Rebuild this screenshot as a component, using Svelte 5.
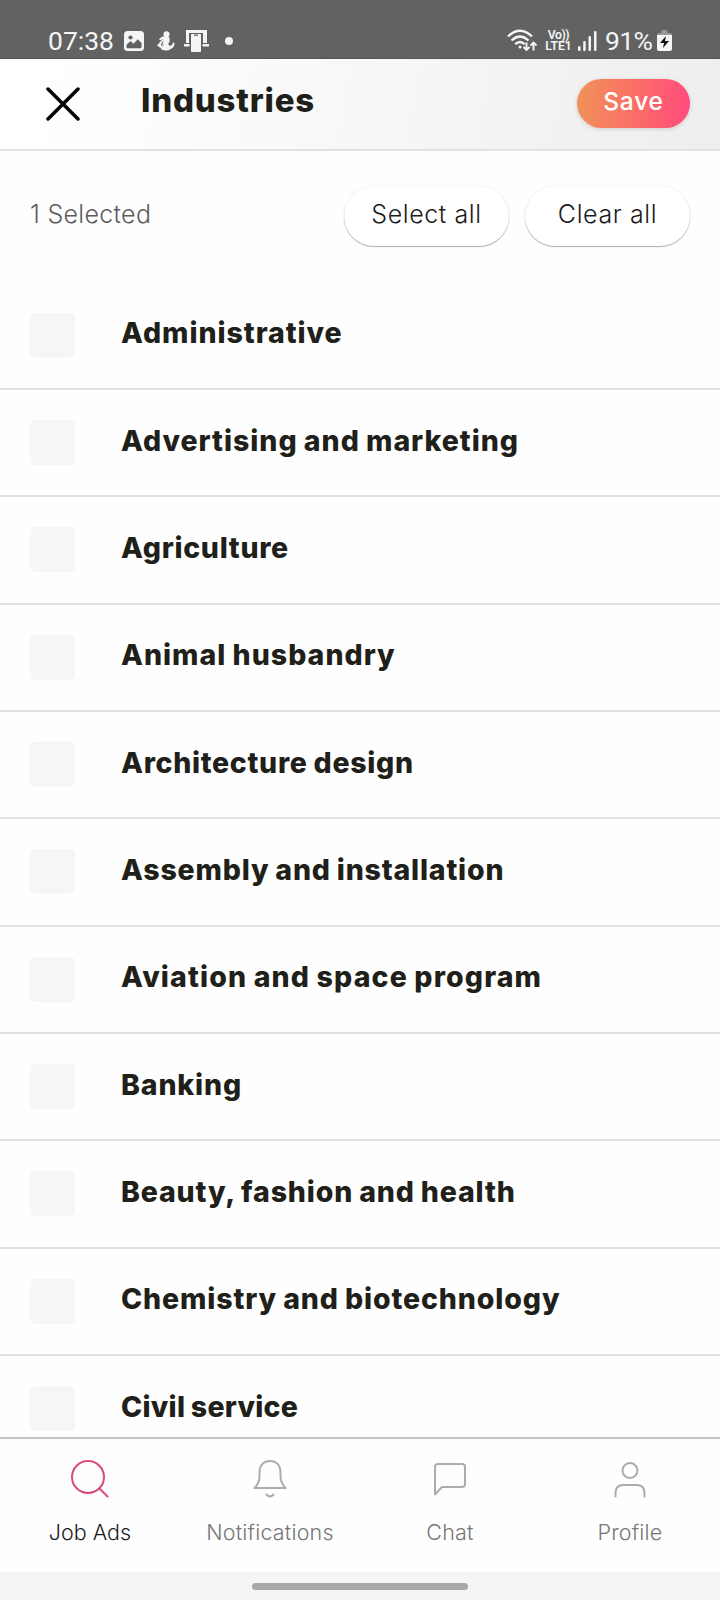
<script>
  const industries = [
    { name: 'Administrative', spacing: 0.95 },
    { name: 'Advertising and marketing', spacing: 0.97 },
    { name: 'Agriculture', spacing: 0.7 },
    { name: 'Animal husbandry', spacing: 1 },
    { name: 'Architecture design', spacing: 0.7 },
    { name: 'Assembly and installation', spacing: 0.8 },
    { name: 'Aviation and space program', spacing: 1.15 },
    { name: 'Banking', spacing: 0.85 },
    { name: 'Beauty, fashion and health', spacing: 0.84 },
    { name: 'Chemistry and biotechnology', spacing: 0.88 },
    { name: 'Civil service', spacing: 0.27 }
  ];

  const tabs = [
    { id: 'jobs', label: 'Job Ads' },
    { id: 'notifications', label: 'Notifications' },
    { id: 'chat', label: 'Chat' },
    { id: 'profile', label: 'Profile' }
  ];

  let activeTab = $state('jobs');
</script>

<div class="screen">
  <div class="status-bar">
    <div class="status-left">
      <span class="clock">07:38</span>
      <svg class="picture" width="20" height="20" viewBox="0 0 20 20">
        <rect width="20" height="20" rx="3.5" fill="#f5f5f5" />
        <circle cx="6.5" cy="6.5" r="2.1" fill="#626262" />
        <path d="M2.500 16v-2.200l4-3.800 3 2.700 4.300-4.500 3.700 3.700V16q0 1.300-1.300 1.300H3.800Q2.500 17.300 2.500 16z" fill="#626262" />
      </svg>
      <svg class="person" width="18" height="20" viewBox="0 0 18 20" fill="#f5f5f5">
        <circle cx="9.500" cy="3.200" r="3" />
        <path d="M2 8.300Q5 4.500 8 5.500l4 .5q1 1 .5 5l-1.500 2 2 2q2.500-.5 3-3.500l1.500.5q0 5-4 6Q12 19.700 8.500 19.500 5 19.500 3.500 17L0 14.500l4.500-5.200L6.500 8 3 9.300z" />
        <path d="M6 10.500 4.300 14l2.200.2" fill="none" stroke="#626262" stroke-width="1" />
      </svg>
      <svg class="device" width="25" height="22" viewBox="0 0 25 22" fill="#f5f5f5">
        <path d="M2 0h21v13h-4V3H5v10H2z" />
        <path d="M0 14h5.500v2.500H0zM18.500 14H25v2.500h-6.500z" />
        <rect x="7" y="3.500" width="10" height="18.500" rx="1" />
        <path d="M6 3.500h12" stroke="#626262" />
        <path d="M10 5.200h4" stroke="#777" stroke-width="1.500" />
      </svg>
      <span class="dot"></span>
    </div>
    <div class="status-right">
      <svg class="wifi" width="31" height="23" viewBox="0 0 31 23" fill="none" stroke="#f5f5f5" stroke-width="2.400">
        <path d="M1 7.500q12-11.500 24 0M4.500 11.500q8.500-8 17 0M8.200 15.200q4.800-4.500 9.600 0" />
        <circle cx="13" cy="18" r="1.500" fill="#f5f5f5" stroke="none" />
        <path d="M19.500 13.500v7.500M16.500 18l3 3 3-3M26.500 21.500V13.500M23.500 16.500l3-3 3 3" stroke-width="1.900" />
      </svg>
      <span class="volte"><span class="vo">Vo))</span><span>LTE1</span></span>
      <svg class="signal" width="19" height="20" viewBox="0 0 19 20" fill="#f5f5f5">
        <rect x="0" y="15" width="2.500" height="5" rx="1" />
        <rect x="5.200" y="10" width="2.500" height="10" rx="1" />
        <rect x="10.500" y="5" width="2.500" height="15" rx="1" />
        <rect x="16" y="0" width="2.500" height="20" rx="1" />
      </svg>
      <span class="percent">91%</span>
      <svg class="battery" width="15" height="22" viewBox="0 0 15 22">
        <path d="M0 5q0-2 2-2h2.500V1.500Q4.500 0 6 0h3q1.500 0 1.500 1.500V3H13q2 0 2 2z" fill="#999" />
        <path d="M0 5h15v14q0 2-2 2H2q-2 0-2-2z" fill="#f5f5f5" />
        <path d="M9 6 3 13h4l-1 5 6-7H8z" fill="#111" />
      </svg>
    </div>
  </div>

  <header class="header">
    <button class="close" aria-label="Close">
      <svg width="34" height="34" viewBox="0 0 34 34" fill="none" stroke="#000" stroke-width="3.500" stroke-linecap="round">
        <path d="M2 2l30 30M32 2 2 32" />
      </svg>
    </button>
    <h1>Industries</h1>
    <button class="save">Save</button>
  </header>

  <main class="content">
    <div class="toolbar">
      <span class="count">1 Selected</span>
      <button class="pill select-all">Select all</button>
      <button class="pill clear-all">Clear all</button>
    </div>
    <ul class="list">
      {#each industries as industry}
        <li>
          <span class="checkbox"></span>
          <span class="name" style="letter-spacing: {industry.spacing}px">{industry.name}</span>
        </li>
      {/each}
    </ul>
  </main>

  <nav class="tabs">
    {#each tabs as tab}
      <button class="tab {tab.id}" class:active={activeTab === tab.id} onclick={() => (activeTab = tab.id)}>
        <svg width="40" height="40" viewBox="0 0 40 40" fill="none" stroke="currentColor" stroke-width="2" stroke-linecap="round" stroke-linejoin="round">
          {#if tab.id === 'jobs'}
            <circle cx="18" cy="18" r="16" />
            <path d="M29.500 29.500l8 8" />
          {:else if tab.id === 'notifications'}
            <path d="M4.500 29q5-5 5-12v-3.500C9.500 6.500 13.500 2 20 2s10.500 4.500 10.500 11.500V17q0 7 5 12zM16.500 35.500q3.500 4 7 0" />
          {:else if tab.id === 'chat'}
            <path d="M5 35.500V8q0-3 3-3h24q3 0 3 3v17q0 3-3 3H12z" />
          {:else}
            <circle cx="20" cy="11.500" r="7.500" />
            <path d="M5.500 37.500V34q0-8 8-8h13q8 0 8 8v3.500" />
          {/if}
        </svg>
        <span>{tab.label}</span>
      </button>
    {/each}
  </nav>
  <div class="gesture-bar"><span></span></div>
</div>

<style>
  :global(body) {
    margin: 0;
    background: #fff;
  }

  .screen {
    display: flex;
    flex-direction: column;
    width: 720px;
    height: 1600px;
    overflow: hidden;
    background: #fefefe;
    color: #211f1a;
    font-family: Inter, 'Open Sans', sans-serif;
  }

  button {
    margin: 0;
    padding: 0;
    border: 0;
    background: none;
    color: inherit;
    font-family: inherit;
    cursor: pointer;
  }

  svg {
    display: block;
    flex-shrink: 0;
  }

  .status-bar {
    display: flex;
    justify-content: space-between;
    box-sizing: border-box;
    height: 59px;
    padding: 22px 48px 0;
    background: #626262;
    border-bottom: 1px solid #565656;
    color: #f5f5f5;
    font-family: Roboto, sans-serif;
    flex-shrink: 0;
  }

  .status-left,
  .status-right {
    display: flex;
    align-items: center;
    height: 37px;
  }

  .clock {
    width: 76px;
    font-size: 26.5px;
  }

  .picture {
    margin-right: 13px;
  }

  .person {
    margin-right: 9px;
  }

  .dot {
    width: 8px;
    height: 8px;
    margin-left: 16px;
    border-radius: 50%;
    background: #f5f5f5;
  }

  .volte {
    display: flex;
    flex-direction: column;
    align-items: center;
    width: 27px;
    margin: 0 6px 0 7px;
    font-size: 12.2px;
    font-weight: 600;
    line-height: 11px;
  }

  .vo {
    letter-spacing: -0.4px;
  }

  .signal {
    margin-right: 8px;
  }

  .percent {
    width: 52px;
    font-size: 26.5px;
    letter-spacing: -0.6px;
  }

  .header {
    display: flex;
    align-items: center;
    box-sizing: border-box;
    height: 92px;
    padding: 0 30px 0 46px;
    border-bottom: 2px solid #e2e2e2;
    background: linear-gradient(100deg, #fff 5%, #f8f8f8 48%, #f2f2f2 75%, #eee);
    flex-shrink: 0;
  }

  h1 {
    flex: 1;
    margin: -8px 0 0 61px;
    font-size: 33px;
    font-weight: 800;
    letter-spacing: 0.8px;
    line-height: 40px;
  }

  .save {
    width: 113px;
    height: 49px;
    margin-top: -2px;
    padding-bottom: 5px;
    border-radius: 25px;
    background: linear-gradient(95deg, #f0935a, #fb6f66 50%, #ff4a7d);
    box-shadow: 0 1px 4px rgba(0, 0, 0, 0.15);
    color: #fff;
    font-size: 24.5px;
    font-weight: 500;
    letter-spacing: 0.8px;
  }

  .content {
    flex: 1;
    min-height: 0;
    overflow: hidden;
  }

  .toolbar {
    display: flex;
    align-items: center;
    gap: 16px;
    height: 60px;
    padding: 35px 30px 36.6px;
  }

  .count {
    flex: 1;
    margin-top: -5px;
    color: #5c5c5c;
    font-size: 25px;
    font-weight: 350;
    letter-spacing: 0.3px;
  }

  .pill {
    width: 165px;
    height: 60px;
    padding-bottom: 5px;
    border-radius: 30px;
    background: #fff;
    box-shadow: 0 1px 1px rgba(0, 0, 0, 0.3), 0 0 2px rgba(0, 0, 0, 0.1);
    color: #1c1c1c;
    font-size: 25px;
    font-weight: 350;
    letter-spacing: 0.6px;
  }

  .list {
    margin: 0;
    padding: 0;
    list-style: none;
  }

  li {
    display: flex;
    align-items: center;
    box-sizing: border-box;
    height: 107.33px;
    padding-left: 30px;
    border-bottom: 2px solid #e1e1e1;
  }

  .checkbox {
    width: 45px;
    height: 45px;
    margin-right: 46px;
    border-radius: 5px;
    background: #f6f6f6;
  }

  .name {
    margin-top: -5px;
    font-size: 28.5px;
    font-weight: 800;
    word-spacing: -1px;
    white-space: nowrap;
  }

  .tabs {
    display: flex;
    box-sizing: border-box;
    height: 135px;
    border-top: 2px solid #c3c3c9;
    background: #fefefe;
    flex-shrink: 0;
  }

  .tab {
    display: flex;
    flex: 1;
    flex-direction: column;
    align-items: center;
    padding-top: 20px;
    color: #acacac;
  }

  .tab.active {
    color: #da4c78;
  }

  .tab span {
    margin-top: 19px;
    color: #777;
    font-size: 21.5px;
    font-weight: 350;
    letter-spacing: 0.2px;
    line-height: 28px;
  }

  .tab.active span {
    color: #1c1c1c;
    letter-spacing: 0;
  }

  .gesture-bar {
    display: flex;
    align-items: center;
    justify-content: center;
    height: 28px;
    background: #f5f5f5;
    flex-shrink: 0;
  }

  .gesture-bar span {
    width: 216px;
    height: 7px;
    border-radius: 4px;
    background: #a9a9a9;
  }
</style>
